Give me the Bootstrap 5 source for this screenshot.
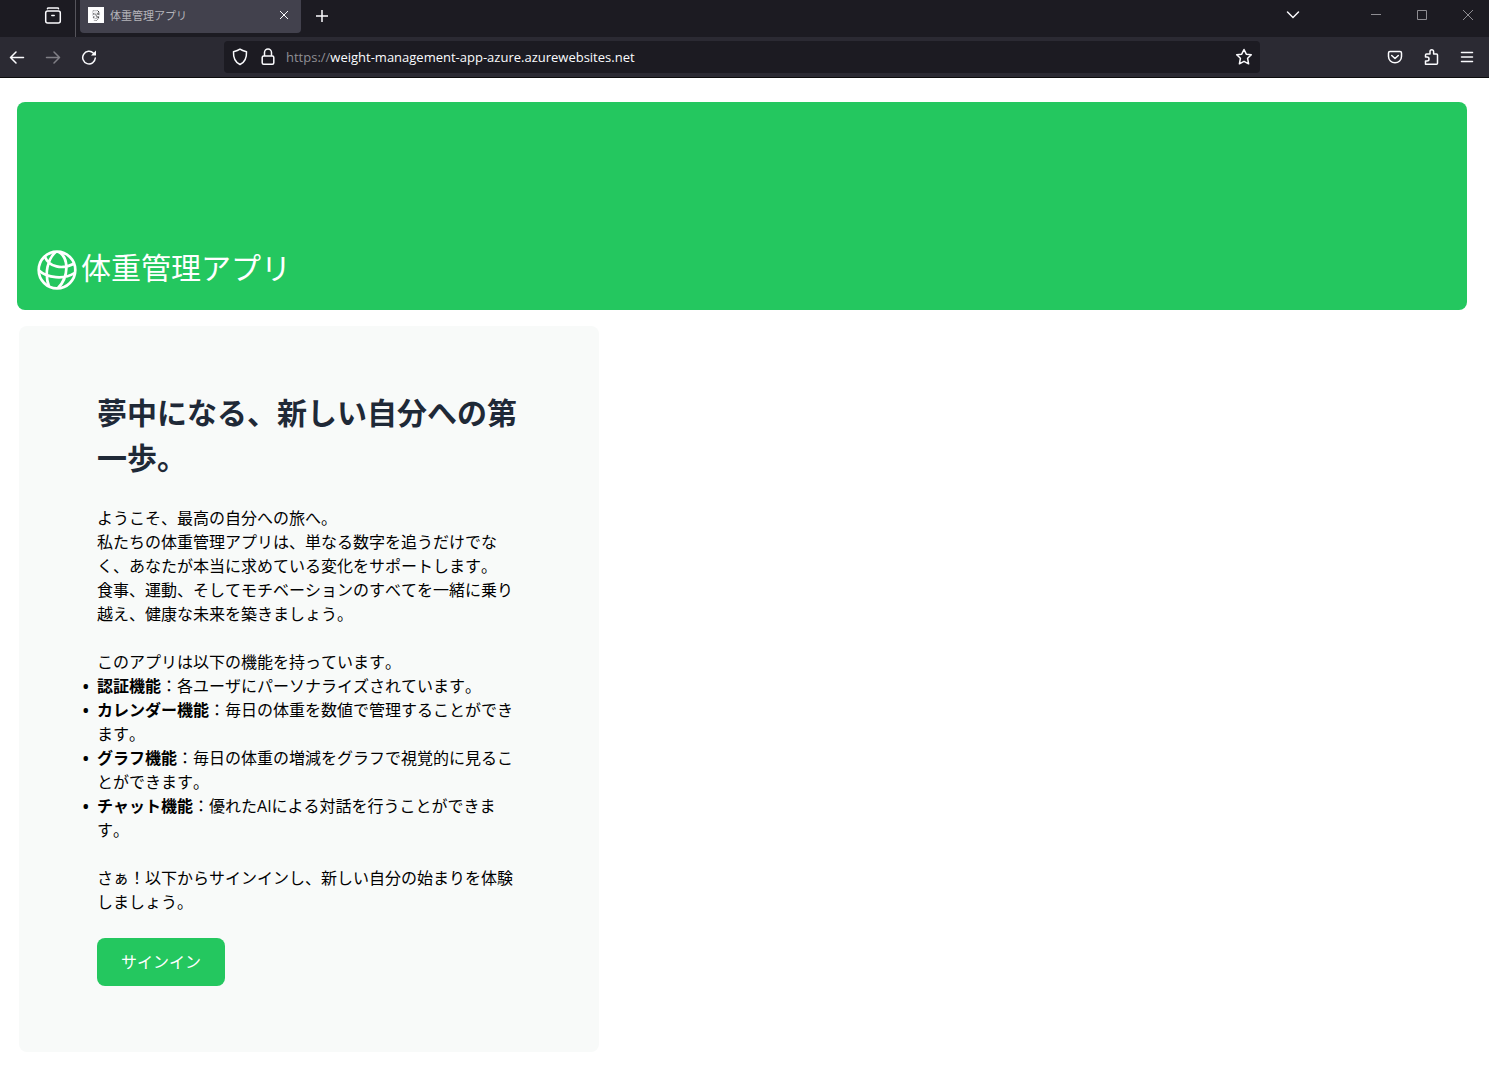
<!DOCTYPE html>
<html lang="ja">
<head>
<meta charset="utf-8">
<meta name="viewport" content="width=device-width, initial-scale=1">
<title>体重管理アプリ</title>
<link href="https://cdn.jsdelivr.net/npm/bootstrap@5.3.0/dist/css/bootstrap.min.css" rel="stylesheet">
<script src="https://cdn.jsdelivr.net/npm/bootstrap@5.3.0/dist/js/bootstrap.bundle.min.js" defer></script>
<style>
  body { font-family: "Open Sans", "Noto Sans CJK JP", sans-serif; font-kerning: none; color: #000; background: #fff; }
  .jp-text { font-family: "Noto Sans CJK JP", sans-serif; font-weight: 400; }
  svg { display: block; fill: none; stroke: currentColor; }

  /* browser frame */
  .tab-strip { height: 37px; background: #1c1b22; color: #fbfbfe; }
  .tool-row { height: 41px; background: #2b2a33; color: #fbfbfe; border-bottom: 1px solid #0c0c0d; padding-right: 5px; gap: 2px; }
  .chrome-btn { width: 34px; height: 32px; padding: 0; border: 0; background: none; color: inherit; display: flex; align-items: center; justify-content: center; flex: none; }
  .chrome-btn:disabled { color: #807f86; }
  .strip-btn { height: 31px; }
  .win-btn { width: 42px; color: #8e8d92; }
  .view-btn { margin-left: 36px; }
  .strip-rule { width: 1px; height: 37px; background: #55545b; margin: 0 4px 0 5px; }
  .page-tab { width: 221px; height: 33px; background: #42414d; border-radius: 0 0 4px 4px; padding: 0 0 3px 8px; }
  .page-tab a { font-family: "Noto Sans CJK JP", sans-serif; font-size: 11px; line-height: 16px; color: #b5b4ba; margin-left: 6px; }
  .window-group { gap: 4px; }
  .list-tabs { margin-right: 45px; }
  .address { height: 32px; background: #1c1b22; border-radius: 4px; margin: 0 116px; padding-left: 8px; font-size: 13px; line-height: 20px; }
  .address .lock { margin-left: 12px; }
  .address label { color: #8f8e94; margin-left: 10px; }
  .address input { border: 0; padding: 0; background: none; color: #fbfbfe; outline: 0; min-width: 0; }

  /* page */
  .page-area { padding: 24px 22px 24px 17px; }
  .hero { height: 208px; background: #24c75f; border-radius: 8px; padding: 0 20px 20px; color: #fff; }
  .hero h1 { font-size: 30px; line-height: 40px; margin: 0 0 4px 4px; }
  .intro { width: 580px; max-width: 100%; margin: 16px 0 0 2px; padding: 64px 78px 66px; background: #f8faf9; border-radius: 8px; font-size: 16px; line-height: 24px; }
  .intro h2 { font-size: 30px; line-height: 45px; font-weight: 700; color: #1f2937; margin: 0 0 26px; }
  .intro p { margin: 0 0 24px; }
  .intro p.list-intro { margin: 0; }
  .intro ul { margin: 0 0 24px; padding: 0; list-style-type: "•\00a0\00a0"; }
  .intro li::marker { font-weight: 700; }
  .btn-signin { background: #24c75f; color: #fff; border: 0; border-radius: 8px; width: 128px; height: 48px; padding: 0 0 2px; font-size: 16px; line-height: 24px; }
  .btn-signin:hover { background: #1fae53; color: #fff; }
</style>
</head>
<body>
<header>
  <div class="tab-strip d-flex align-items-start">
    <button class="chrome-btn strip-btn view-btn" type="button" aria-label="Firefox View">
      <svg width="18" height="18" viewBox="0 0 18 18" stroke-width="1.5" stroke-linecap="round"><path d="M3.500 1.700Q3.500 1 4.500 1h9q1 0 1 .7"/><rect x="1.700" y="4" width="14.600" height="12" rx="2"/><path d="M7.800 8.500h2.400"/></svg>
    </button>
    <span class="strip-rule"></span>
    <div class="page-tab d-flex align-items-center">
      <svg width="16" height="16" viewBox="0 0 16 16" stroke="none"><path fill="#fff" d="M0 0h16v16H0z"/><path fill="#333" d="M5 3h5l2 2v3l-1 4-2 2H6l-1-3-1-3V5z"/><path fill="#ddd" d="M6 4h3l1 1-2 1H5zM5 8h2v1H5zM9 8h2v1H9zM7 9h1v2H7zM6 12l2-1 1 1-1 1z"/><path fill="#000" d="M4 6h3v2H5zM8 6h4v2H9zM6 11h4v1H6z"/></svg>
      <a class="text-decoration-none flex-grow-1" href="#">体重管理アプリ</a>
      <button class="chrome-btn" type="button" aria-label="タブを閉じる"><svg width="10" height="10" viewBox="0 0 10 10"><path d="M1 1l8 8M9 1L1 9"/></svg></button>
    </div>
    <button class="chrome-btn strip-btn ms-1" type="button" aria-label="新しいタブ"><svg width="14" height="14" viewBox="0 0 14 14" stroke-width="1.500"><path d="M7 1v12M1 7h12"/></svg></button>
    <button class="chrome-btn strip-btn ms-auto list-tabs" type="button" aria-label="タブの一覧"><svg width="14" height="12" viewBox="0 0 14 12" stroke-width="1.500" stroke-linecap="round"><path d="M1.500 2L7 7.500 12.500 2"/></svg></button>
    <div class="window-group d-flex">
      <button class="chrome-btn strip-btn win-btn" type="button" aria-label="最小化"><svg width="10" height="11" viewBox="0 0 10 11"><path d="M0 4.500h10"/></svg></button>
      <button class="chrome-btn strip-btn win-btn" type="button" aria-label="最大化"><svg width="10" height="11" viewBox="0 0 10 11"><path d="M.5 .5h9v9h-9z"/></svg></button>
      <button class="chrome-btn strip-btn win-btn" type="button" aria-label="閉じる"><svg width="10" height="11" viewBox="0 0 10 11"><path d="M0 0l10 10M10 0L0 10"/></svg></button>
    </div>
  </div>
  <div class="tool-row d-flex align-items-center">
    <button class="chrome-btn" type="button" aria-label="戻る"><svg width="16" height="14" viewBox="0 0 16 14" stroke-width="1.500" stroke-linecap="round" stroke-linejoin="round"><path d="M14.500 7.500H1.500M7 2L1.500 7.500 7 13"/></svg></button>
    <button class="chrome-btn" type="button" aria-label="進む" disabled><svg width="16" height="14" viewBox="0 0 16 14" stroke-width="1.500" stroke-linecap="round" stroke-linejoin="round"><path d="M1.500 7.500h13M9 2L14.500 7.500 9 13"/></svg></button>
    <button class="chrome-btn" type="button" aria-label="再読み込み"><svg width="16" height="16" viewBox="0 0 16 16" stroke-width="1.500" stroke-linecap="round"><path d="M12.500 4.200A6.300 6.300 0 1 0 14.300 9"/><path fill="currentColor" stroke="none" d="M15 1.500v5H10z"/></svg></button>
    <div class="address d-flex align-items-center flex-grow-1">
      <svg width="16" height="18" viewBox="0 0 16 18" stroke-width="1.500" stroke-linejoin="round"><path d="M8 1.200c2 1.500 4 2 6.500 2.500.3 6.300-1.500 10.500-6.500 12.800C3 14.200 1.200 10 1.500 3.700 4 3.200 6 2.700 8 1.200z"/></svg>
      <svg class="lock" width="16" height="18" viewBox="0 0 16 18" stroke-width="1.500"><rect x="2.200" y="8" width="11.600" height="8.200" rx="1.500"/><path d="M4.500 8V4.500a3.500 3.500 0 0 1 7 0V8"/></svg>
      <label for="url">https://</label>
      <input id="url" class="flex-grow-1" type="text" value="weight-management-app-azure.azurewebsites.net">
      <button class="chrome-btn" type="button" aria-label="ブックマーク"><svg width="18" height="18" viewBox="0 0 18 18" stroke-width="1.500" stroke-linejoin="round"><path d="M10 1.500l2.300 4.700 5 .6-3.700 3.500 1 5.500-4.600-2.500-4.600 2.500 1-5.500-3.700-3.500 5-.6z"/></svg></button>
    </div>
    <button class="chrome-btn" type="button" aria-label="Pocket"><svg width="16" height="16" viewBox="0 0 16 16" stroke-width="1.500" stroke-linecap="round" stroke-linejoin="round"><path d="M3 2.500h10q1.500 0 1.500 1.500V7.500a6.500 6.300 0 0 1-13 0V4Q1.500 2.500 3 2.500z"/><path d="M4.700 6.500L8 9.500l3.300-3"/></svg></button>
    <button class="chrome-btn" type="button" aria-label="拡張機能"><svg width="16" height="18" viewBox="0 0 16 18" stroke-width="1.500" stroke-linejoin="round"><path d="M2.500 16.200V13H4a2 2 0 0 0 0-4H2.500V7q0-1 1-1H7V3.500a1.800 1.800 0 0 1 3.600 0V6H13.500q1 0 1 1v8.200q0 1-1 1z"/></svg></button>
    <button class="chrome-btn" type="button" aria-label="メニュー"><svg width="14" height="12" viewBox="0 0 14 12" stroke-width="1.500" stroke-linecap="round"><path d="M1.500 1.500h11M1.500 6h11M1.500 10.500h11"/></svg></button>
  </div>
</header>

<main class="page-area">
  <div class="hero d-flex align-items-end">
    <svg width="40" height="40" viewBox="0 0 40 40" stroke-width="2.700"><circle cx="20" cy="20" r="18.300"/><path d="M18.500 2C11 9 7 23 12 36.500M22 2C32 8 32 27 21 38M8 7C12 17 25 20 37.500 13.500M2 20.500C10 28 27 30 37.500 23"/></svg>
    <h1 class="jp-text">体重管理アプリ</h1>
  </div>

  <section class="intro">
    <h2>夢中になる、新しい自分への第一歩。</h2>
    <p>ようこそ、最高の自分への旅へ。<br>私たちの体重管理アプリは、単なる数字を追うだけでなく、あなたが本当に求めている変化をサポートします。<br>食事、運動、そしてモチベーションのすべてを一緒に乗り越え、健康な未来を築きましょう。</p>
    <p class="list-intro">このアプリは以下の機能を持っています。</p>
    <ul>
      <li><strong>認証機能</strong>：各ユーザにパーソナライズされています。</li>
      <li><strong>カレンダー機能</strong>：毎日の体重を数値で管理することができます。</li>
      <li><strong>グラフ機能</strong>：毎日の体重の増減をグラフで視覚的に見ることができます。</li>
      <li><strong>チャット機能</strong>：優れたAIによる対話を行うことができます。</li>
    </ul>
    <p>さぁ！以下からサインインし、新しい自分の始まりを体験しましょう。</p>
    <button class="btn btn-signin jp-text d-block" type="button">サインイン</button>
  </section>
</main>
</body>
</html>
